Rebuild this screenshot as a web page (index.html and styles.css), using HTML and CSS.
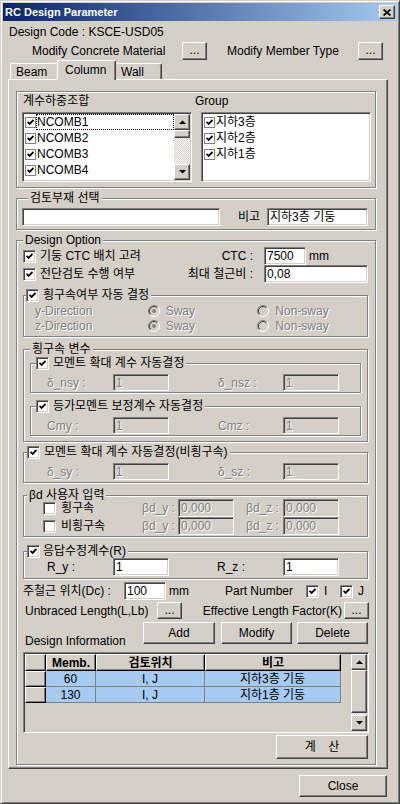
FILE: index.html
```html
<!DOCTYPE html>
<html lang="ko">
<head>
<meta charset="utf-8">
<title>RC Design Parameter</title>
<link rel="stylesheet" href="styles.css">
</head>
<body>
<div class="win">
  <div class="titlebar">
    <span class="title">RC Design Parameter</span>
    <span class="xbtn"><svg width="8" height="7" viewBox="0 0 8 7"><path d="M0.6 0.5 L7.4 6.5 M7.4 0.5 L0.6 6.5" stroke="#000" stroke-width="1.7" fill="none"/></svg></span>
  </div>
  <div class="code">Design Code : KSCE-USD05</div>
  <div class="modrow">
    <span class="m1">Modify Concrete Material</span>
    <span class="btn dots">...</span>
    <span class="m2">Modify Member Type</span>
    <span class="btn dots">...</span>
  </div>
  <div class="tabs">
    <span class="tab beam">Beam</span>
    <span class="tab sel">Column</span>
    <span class="tab wall">Wall</span>
  </div>
  <div class="panel">
    <div class="etch combos">
      <div class="ccol">
        <div class="clbl">계수하중조합</div>
        <div class="list">
          <div class="items">
            <div class="li"><span class="lcb"><svg class="ck" width="7" height="7" viewBox="0 0 7 7"><path d="M0.5 2.8 L2.6 4.9 L6.5 1" fill="none" stroke="#000" stroke-width="1.8"/></svg></span><span class="lt focus">NCOMB1</span></div>
            <div class="li"><span class="lcb"><svg class="ck" width="7" height="7" viewBox="0 0 7 7"><path d="M0.5 2.8 L2.6 4.9 L6.5 1" fill="none" stroke="#000" stroke-width="1.8"/></svg></span><span class="lt">NCOMB2</span></div>
            <div class="li"><span class="lcb"><svg class="ck" width="7" height="7" viewBox="0 0 7 7"><path d="M0.5 2.8 L2.6 4.9 L6.5 1" fill="none" stroke="#000" stroke-width="1.8"/></svg></span><span class="lt">NCOMB3</span></div>
            <div class="li"><span class="lcb"><svg class="ck" width="7" height="7" viewBox="0 0 7 7"><path d="M0.5 2.8 L2.6 4.9 L6.5 1" fill="none" stroke="#000" stroke-width="1.8"/></svg></span><span class="lt">NCOMB4</span></div>
            <div class="li"><span class="lcb"><svg class="ck" width="7" height="7" viewBox="0 0 7 7"><path d="M0.5 2.8 L2.6 4.9 L6.5 1" fill="none" stroke="#000" stroke-width="1.8"/></svg></span><span class="lt">NCOMB5</span></div>
          </div>
          <div class="vsb s1">
            <span class="btn sbb"><svg width="7" height="4" viewBox="0 0 7 4"><path d="M0 4 L7 4 L3.5 0.5 Z" fill="#000"/></svg></span>
            <span class="btn thumb"></span>
            <span class="track"></span>
            <span class="btn sbb"><svg width="7" height="4" viewBox="0 0 7 4"><path d="M0 0 L7 0 L3.5 3.5 Z" fill="#000"/></svg></span>
          </div>
        </div>
      </div>
      <div class="ccol">
        <div class="clbl glbl">Group</div>
        <div class="list">
          <div class="items">
            <div class="li"><span class="lcb"><svg class="ck" width="7" height="7" viewBox="0 0 7 7"><path d="M0.5 2.8 L2.6 4.9 L6.5 1" fill="none" stroke="#000" stroke-width="1.8"/></svg></span><span class="lt">지하3층</span></div>
            <div class="li"><span class="lcb"><svg class="ck" width="7" height="7" viewBox="0 0 7 7"><path d="M0.5 2.8 L2.6 4.9 L6.5 1" fill="none" stroke="#000" stroke-width="1.8"/></svg></span><span class="lt">지하2층</span></div>
            <div class="li"><span class="lcb"><svg class="ck" width="7" height="7" viewBox="0 0 7 7"><path d="M0.5 2.8 L2.6 4.9 L6.5 1" fill="none" stroke="#000" stroke-width="1.8"/></svg></span><span class="lt">지하1층</span></div>
          </div>
        </div>
      </div>
    </div>

    <div class="etch member">
      <div class="cap c6">검토부재 선택</div>
      <div class="mrow">
        <span class="fld f-mem"></span>
        <span class="bigo">비고</span>
        <span class="fld f-bigo">지하3층 기둥</span>
      </div>
    </div>

    <div class="etch opt">
      <div class="cap c6">Design Option</div>
      <div class="orow">
        <span class="oleft"><span class="cb"><svg class="ck" width="7" height="7" viewBox="0 0 7 7"><path d="M0.5 2.8 L2.6 4.9 L6.5 1" fill="none" stroke="#000" stroke-width="1.8"/></svg></span>기둥 CTC 배치 고려</span>
        <span class="rl">CTC :</span>
        <span class="fld f-ctc">7500</span>
        <span class="unit">mm</span>
      </div>
      <div class="orow">
        <span class="oleft"><span class="cb"><svg class="ck" width="7" height="7" viewBox="0 0 7 7"><path d="M0.5 2.8 L2.6 4.9 L6.5 1" fill="none" stroke="#000" stroke-width="1.8"/></svg></span>전단검토 수행 여부</span>
        <span class="rl">최대 철근비 :</span>
        <span class="fld f-ratio">0,08</span>
      </div>

      <div class="etch sway">
        <div class="cap cbcap m2c"><span class="cb"><svg class="ck" width="7" height="7" viewBox="0 0 7 7"><path d="M0.5 2.8 L2.6 4.9 L6.5 1" fill="none" stroke="#000" stroke-width="1.8"/></svg></span>횡구속여부 자동 결정</div>
        <div class="rrow first">
          <span class="dl dis">y-Direction</span>
          <span class="rad dis"><svg width="12" height="12" viewBox="0 0 12 12"><circle cx="6" cy="6" r="5.5" fill="#d4d0c8"/><path d="M9.9 2.1A5.5 5.5 0 0 0 2.1 9.9" fill="none" stroke="#808080"/><path d="M2.1 9.9A5.5 5.5 0 0 0 9.9 2.1" fill="none" stroke="#fff"/><path d="M9.2 2.8A4.5 4.5 0 0 0 2.8 9.2" fill="none" stroke="#404040"/><circle cx="6" cy="6" r="1.9" fill="#808080"/></svg>Sway</span>
          <span class="rad dis"><svg width="12" height="12" viewBox="0 0 12 12"><circle cx="6" cy="6" r="5.5" fill="#d4d0c8"/><path d="M9.9 2.1A5.5 5.5 0 0 0 2.1 9.9" fill="none" stroke="#808080"/><path d="M2.1 9.9A5.5 5.5 0 0 0 9.9 2.1" fill="none" stroke="#fff"/><path d="M9.2 2.8A4.5 4.5 0 0 0 2.8 9.2" fill="none" stroke="#404040"/></svg>Non-sway</span>
        </div>
        <div class="rrow">
          <span class="dl dis">z-Direction</span>
          <span class="rad dis"><svg width="12" height="12" viewBox="0 0 12 12"><circle cx="6" cy="6" r="5.5" fill="#d4d0c8"/><path d="M9.9 2.1A5.5 5.5 0 0 0 2.1 9.9" fill="none" stroke="#808080"/><path d="M2.1 9.9A5.5 5.5 0 0 0 9.9 2.1" fill="none" stroke="#fff"/><path d="M9.2 2.8A4.5 4.5 0 0 0 2.8 9.2" fill="none" stroke="#404040"/><circle cx="6" cy="6" r="1.9" fill="#808080"/></svg>Sway</span>
          <span class="rad dis"><svg width="12" height="12" viewBox="0 0 12 12"><circle cx="6" cy="6" r="5.5" fill="#d4d0c8"/><path d="M9.9 2.1A5.5 5.5 0 0 0 2.1 9.9" fill="none" stroke="#808080"/><path d="M2.1 9.9A5.5 5.5 0 0 0 9.9 2.1" fill="none" stroke="#fff"/><path d="M9.2 2.8A4.5 4.5 0 0 0 2.8 9.2" fill="none" stroke="#404040"/></svg>Non-sway</span>
        </div>
      </div>

      <div class="etch g2">
        <div class="cap c6">횡구속 변수</div>
        <div class="etch sin s-a">
          <div class="cap cbcap m5c"><span class="cb"><svg class="ck" width="7" height="7" viewBox="0 0 7 7"><path d="M0.5 2.8 L2.6 4.9 L6.5 1" fill="none" stroke="#000" stroke-width="1.8"/></svg></span>모멘트 확대 계수 자동결정</div>
          <div class="vrow">
            <span class="vl1 dis">δ_nsy :</span>
            <span class="fld dis fv">1</span>
            <span class="vl2 dis">δ_nsz :</span>
            <span class="fld dis fv">1</span>
          </div>
        </div>
        <div class="etch sin s-b">
          <div class="cap cbcap m5c"><span class="cb"><svg class="ck" width="7" height="7" viewBox="0 0 7 7"><path d="M0.5 2.8 L2.6 4.9 L6.5 1" fill="none" stroke="#000" stroke-width="1.8"/></svg></span>등가모멘트 보정계수 자동결정</div>
          <div class="vrow">
            <span class="vl1 dis">Cmy :</span>
            <span class="fld dis fv">1</span>
            <span class="vl2 dis">Cmz :</span>
            <span class="fld dis fv">1</span>
          </div>
        </div>
      </div>

      <div class="etch g3">
        <div class="cap cbcap m3c"><span class="cb"><svg class="ck" width="7" height="7" viewBox="0 0 7 7"><path d="M0.5 2.8 L2.6 4.9 L6.5 1" fill="none" stroke="#000" stroke-width="1.8"/></svg></span>모멘트 확대 계수 자동결정(비횡구속)</div>
        <div class="vrow">
          <span class="wl1 dis">δ_sy :</span>
          <span class="fld dis fv">1</span>
          <span class="vl2 dis">δ_sz :</span>
          <span class="fld dis fv">1</span>
        </div>
      </div>

      <div class="etch g4">
        <div class="cap bcap">βd 사용자 입력</div>
        <div class="brow">
          <span class="bl"><span class="cb"></span>횡구속</span>
          <span class="bly dis">βd_y :</span>
          <span class="fld dis fv">0,000</span>
          <span class="blz dis">βd_z :</span>
          <span class="fld dis fv">0,000</span>
        </div>
        <div class="brow">
          <span class="bl"><span class="cb"></span>비횡구속</span>
          <span class="bly dis">βd_y :</span>
          <span class="fld dis fv">0,000</span>
          <span class="blz dis">βd_z :</span>
          <span class="fld dis fv">0,000</span>
        </div>
      </div>

      <div class="etch g5">
        <div class="cap cbcap m3c g3c"><span class="cb"><svg class="ck" width="7" height="7" viewBox="0 0 7 7"><path d="M0.5 2.8 L2.6 4.9 L6.5 1" fill="none" stroke="#000" stroke-width="1.8"/></svg></span>응답수정계수(R)</div>
        <div class="rrow2">
          <span class="wl1">R_y :</span>
          <span class="fld fv">1</span>
          <span class="vl2 rz">R_z :</span>
          <span class="fld fv">1</span>
        </div>
      </div>

      <div class="dcrow">
        <span class="dcl">주철근 위치(Dc) :</span>
        <span class="fld f-dc">100</span>
        <span class="mm">mm</span>
        <span class="pn">Part Number</span>
        <span class="cb"><svg class="ck" width="7" height="7" viewBox="0 0 7 7"><path d="M0.5 2.8 L2.6 4.9 L6.5 1" fill="none" stroke="#000" stroke-width="1.8"/></svg></span>
        <span class="pi">I</span>
        <span class="cb"><svg class="ck" width="7" height="7" viewBox="0 0 7 7"><path d="M0.5 2.8 L2.6 4.9 L6.5 1" fill="none" stroke="#000" stroke-width="1.8"/></svg></span>
        <span class="pj">J</span>
      </div>

      <div class="ubrow">
        <span class="ul">Unbraced Length(L,Lb)</span>
        <span class="btn dots d17">...</span>
        <span class="el">Effective Length Factor(K)</span>
        <span class="btn dots d17">...</span>
      </div>

      <div class="actrow">
        <span class="dinfo">Design Information</span>
        <span class="btn b-add">Add</span>
        <span class="btn b-mod">Modify</span>
        <span class="btn b-del">Delete</span>
      </div>

      <div class="tbl">
        <div class="grid">
          <div class="trow hrow">
            <span class="th c0"></span>
            <span class="th c1">Memb.</span>
            <span class="th c2">검토위치</span>
            <span class="th c3">비고</span>
          </div>
          <div class="trow drow">
            <span class="rh c0"></span>
            <span class="td c1">60</span>
            <span class="td c2">I, J</span>
            <span class="td c3">지하3층 기둥</span>
          </div>
          <div class="trow drow">
            <span class="rh c0"></span>
            <span class="td c1">130</span>
            <span class="td c2">I, J</span>
            <span class="td c3">지하1층 기둥</span>
          </div>
        </div>
        <div class="vsb s2">
          <span class="btn sbb"><svg width="7" height="4" viewBox="0 0 7 4"><path d="M0 4 L7 4 L3.5 0.5 Z" fill="#000"/></svg></span>
          <span class="btn thumb"></span>
          <span class="track"></span>
          <span class="btn sbb"><svg width="7" height="4" viewBox="0 0 7 4"><path d="M0 0 L7 0 L3.5 3.5 Z" fill="#000"/></svg></span>
        </div>
      </div>

      <div class="calcrow">
        <span class="btn calc">계 산</span>
      </div>
    </div>
  </div>
  <div class="closerow">
    <span class="btn close">Close</span>
  </div>
</div>
</body>
</html>
```

FILE: styles.css
```css
* { box-sizing: border-box; }
html, body { margin: 0; padding: 0; }
body {
  width: 400px; height: 804px; overflow: hidden;
  background: #d4d0c8; color: #000;
  font: 12px/14px "Liberation Sans", "Noto Sans CJK KR", sans-serif;
}
.win {
  width: 400px; height: 804px;
  border: 1px solid; border-color: #d4d0c8 #404040 #404040 #d4d0c8;
  box-shadow: inset 1px 1px #fff, inset -1px -1px #808080;
  padding: 2px;
}
.titlebar {
  height: 18px; display: flex; align-items: center; padding-left: 2px;
  background: linear-gradient(to right, #0a246a, #a6caf0); color: #fff;
}
.title { font-weight: bold; font-size: 11px; line-height: 14px; }
.xbtn {
  margin-left: auto; margin-right: 2px; width: 16px; height: 14px;
  display: flex; align-items: center; justify-content: center;
  background: #d4d0c8;
  border: 1px solid; border-color: #fff #404040 #404040 #fff;
  box-shadow: inset -1px -1px #808080;
}
.btn {
  display: flex; align-items: center; justify-content: center; flex: none;
  background: #d4d0c8;
  border: 1px solid; border-color: #fff #404040 #404040 #fff;
  box-shadow: inset -1px -1px #808080;
}
.code { margin-top: 3px; height: 16px; line-height: 16px; padding-left: 6px; }
.modrow { margin-top: 2px; height: 18px; display: flex; align-items: center; }
.m1 { margin-left: 29px; width: 150px; }
.m2 { margin-left: 20px; width: 131px; }
.dots { width: 25px; height: 18px; padding-bottom: 2px; }
.d17 { height: 17px; }

/* tabs */
.tabs { height: 19px; display: flex; align-items: flex-end; padding-left: 7px; }
.tab {
  height: 16px; display: flex; align-items: center;
  border-top: 1px solid #fff; border-left: 1px solid #fff; border-right: 1px solid #404040;
  box-shadow: inset -1px 0 #808080; border-radius: 2px 2px 0 0; background: #d4d0c8;
}
.beam { width: 47px; padding-left: 5px; border-right: none; box-shadow: none; }
.sel { width: 59px; height: 20px; margin-bottom: -1px; position: relative; z-index: 1; padding-left: 7px; padding-bottom: 2px; }
.wall { width: 46px; padding-left: 5px; border-left: none; }

.panel {
  margin-left: 5px; width: 380px; height: 690px;
  border: 1px solid; border-color: #fff #404040 #404040 #fff;
  box-shadow: inset -1px -1px #808080;
  padding: 11px 0 0 7px;
}

/* etched boxes */
.etch { border: 1px solid #808080; box-shadow: inset 1px 1px #fff, 1px 1px #fff; }
.cap {
  margin-top: -8px; height: 14px; line-height: 14px; width: max-content;
  background: #d4d0c8; padding: 0 2px; display: flex; align-items: center;
}
.c6 { margin-left: 6px; }
.cbcap { padding-left: 0; gap: 4px; }
.m2c { margin-left: 2px; }
.m3c { margin-left: 3px; }
.m5c { margin-left: 5px; }
.g3c { gap: 3px; }

/* combos */
.combos { width: 360px; height: 97px; display: flex; gap: 9px; padding: 2px 0 0 5px; }
.ccol { width: 170px; }
.clbl { height: 14px; line-height: 14px; padding-left: 1px; margin-bottom: 4px; }
.glbl { margin-left: -6px; padding-left: 0; }
.list {
  height: 70px; display: flex; background: #fff; padding: 1px;
  border: 1px solid; border-color: #808080 #fff #fff #808080;
  box-shadow: inset 1px 1px #404040, inset -1px -1px #d4d0c8;
}
.items { flex: 1; height: 66px; overflow: hidden; }
.li { height: 16px; display: flex; align-items: center; padding-left: 1px; }
.lcb {
  width: 11px; height: 11px; flex: none; background: #fff;
  border: 1px solid #808080;
  display: flex; align-items: center; justify-content: center;
}
.lt { flex: 1; height: 16px; line-height: 16px; padding-left: 1px; }
.focus { outline: 1px dotted #000; outline-offset: -1px; }

.vsb { width: 16px; flex: none; display: flex; flex-direction: column; }
.sbb { width: 16px; height: 16px; }
.track { flex: 1; background: repeating-conic-gradient(#fff 0% 25%, #d4d0c8 0% 50%) 0 0 / 2px 2px; }
.s1 .thumb { height: 8px; }
.s2 .thumb { height: 43px; }

/* fields */
.fld {
  height: 18px; flex: none; display: flex; align-items: center; padding: 0 2px;
  background: #fff; white-space: nowrap; overflow: hidden;
  border: 1px solid; border-color: #808080 #fff #fff #808080;
  box-shadow: inset 1px 1px #404040, inset -1px -1px #d4d0c8;
}
.fld.dis { background: #d4d0c8; }
.dis { color: #808080; text-shadow: 1px 1px 0 #fff; }

.cb {
  width: 13px; height: 13px; flex: none; background: #fff;
  display: flex; align-items: center; justify-content: center;
  border: 1px solid; border-color: #808080 #fff #fff #808080;
  box-shadow: inset 1px 1px #404040, inset -1px -1px #d4d0c8;
}

/* member box */
.member { width: 360px; margin-top: 10px; padding: 0 0 3px 5px; }
.mrow { margin-top: 3px; height: 18px; display: flex; align-items: center; }
.f-mem { width: 198px; }
.bigo { margin-left: 18px; width: 29px; }
.f-bigo { width: 101px; }

/* design option */
.opt { width: 360px; margin-top: 10px; padding-bottom: 5px; }
.orow { height: 18px; display: flex; align-items: center; }
.oleft { width: 166px; padding-left: 6px; display: flex; align-items: center; gap: 4px; }
.rl { width: 70px; text-align: right; }
.f-ctc { margin-left: 11px; width: 42px; }
.f-ratio { margin-left: 11px; width: 104px; }
.unit { margin-left: 3px; }

.sway { width: 345px; margin: 12px 0 0 6px; padding-bottom: 3px; }
.rrow { height: 15px; display: flex; align-items: center; }
.rrow.first { margin-top: 1px; }
.dl { width: 126px; padding-left: 11px; }
.rad { width: 112px; display: flex; align-items: center; }
.rad svg { margin-right: 6px; flex: none; }

.g2 { width: 345px; margin: 12px 0 0 6px; padding-bottom: 5px; }
.sin { width: 331px; margin-left: 6px; padding-bottom: 1px; }
.s-a { margin-top: 7px; }
.s-b { margin-top: 13px; }
.vrow { margin-top: 4px; height: 17px; display: flex; align-items: center; }
.vrow .fld { height: 17px; }
.fv { width: 56px; }
.vl1 { width: 82px; padding-left: 16px; }
.vl2 { width: 114px; padding-left: 49px; }
.wl1 { width: 89px; padding-left: 23px; }

.g3 { width: 345px; margin: 10px 0 0 6px; padding-bottom: 2px; }

.g4 { width: 345px; margin: 12px 0 0 6px; padding-bottom: 1px; }
.bcap { margin-left: 3px; margin-bottom: -3px; }
.brow { height: 18px; display: flex; align-items: center; }
.bl { width: 118px; padding-left: 19px; display: flex; align-items: center; gap: 5px; }
.bly { width: 36px; }
.blz { width: 49px; padding-left: 12px; }

.g5 { width: 345px; margin: 14px 0 0 6px; padding-bottom: 2px; }
.rrow2 { height: 18px; display: flex; align-items: center; }
.rz { padding-left: 48px; }

.dcrow { margin-top: 3px; height: 18px; display: flex; align-items: center; padding-left: 6px; }
.dcl { width: 101px; }
.f-dc { width: 42px; }
.mm { margin-left: 3px; width: 56px; }
.pn { width: 81px; }
.pi { margin-left: 5px; width: 16px; }
.pj { margin-left: 5px; }

.ubrow { margin-top: 2px; height: 17px; display: flex; align-items: center; padding-left: 8px; }
.ul { width: 132px; }
.el { width: 160px; text-align: right; margin-right: 2px; white-space: nowrap; }

.actrow { margin-top: 3px; height: 22px; display: flex; align-items: flex-start; }
.dinfo { width: 126px; padding-left: 8px; margin-top: 12px; }
.b-add { width: 72px; height: 22px; }
.b-mod { width: 71px; height: 22px; margin-left: 6px; }
.b-del { width: 71px; height: 22px; margin-left: 5px; }

/* table */
.tbl {
  margin: 8px 0 0 6px; width: 346px; height: 81px; display: flex; padding: 1px;
  border: 1px solid; border-color: #808080 #fff #fff #808080;
  box-shadow: inset 1px 1px #404040, inset -1px -1px #d4d0c8;
}
.grid { flex: 1; background: #d4d0c8; }
.trow { display: flex; }
.hrow { height: 17px; }
.drow { height: 16px; }
.c0 { width: 21px; }
.c1 { width: 50px; }
.c2 { width: 109px; }
.c3 { width: 136px; }
.th, .rh {
  display: flex; align-items: center; justify-content: center; background: #d4d0c8;
  border: 1px solid; border-color: #fff #000 #000 #fff;
  box-shadow: inset -1px -1px #808080;
}
.th { font-weight: bold; }
.td {
  display: flex; align-items: center; justify-content: center; background: #a6caf0;
  border-right: 1px solid #808080; border-bottom: 1px solid #808080;
}

.calcrow { margin-top: 2px; display: flex; justify-content: flex-end; padding-right: 7px; }
.calc { width: 92px; height: 24px; word-spacing: 9px; }

.closerow { margin-top: 6px; display: flex; justify-content: flex-end; padding-right: 10px; }
.close { width: 88px; height: 22px; }
```
